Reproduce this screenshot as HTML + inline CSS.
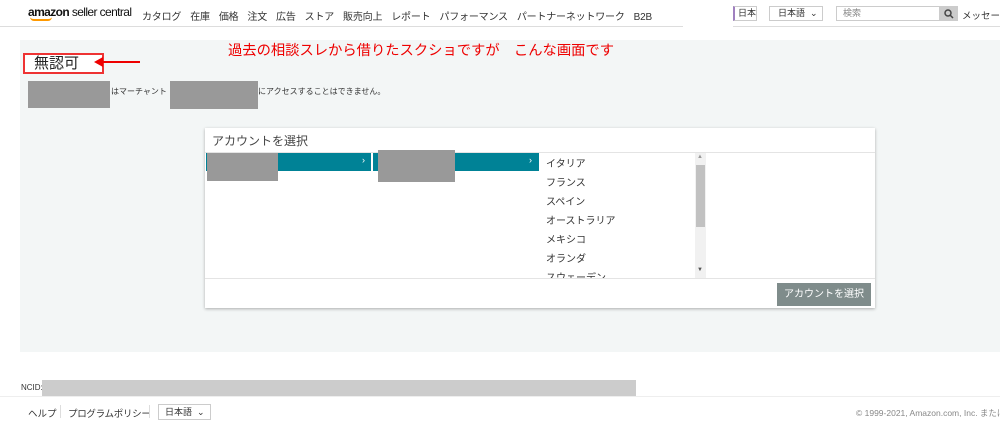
<!DOCTYPE html>
<html><head><meta charset="utf-8"><style>
*{margin:0;padding:0;box-sizing:border-box}
body{width:1000px;height:425px;overflow:hidden;background:#fff;font-family:"Liberation Sans","Noto Sans CJK JP",sans-serif;color:#333;position:relative}
.a{position:absolute;white-space:nowrap}
.nav span{margin-right:9px}
</style></head><body>
<div class="a" style="left:0;top:26px;width:683px;height:1px;background:#ddd"></div>
<div class="a" style="left:733px;top:26px;width:267px;height:1px;background:#ddd"></div>
<div class="a" style="left:28px;top:5px;font-size:12px;font-weight:bold;color:#111;letter-spacing:-0.6px">amazon <span style="font-weight:normal">seller central</span></div>
<div class="a" style="left:30px;top:17px;width:22px;height:4px;border-bottom:2px solid #f90;border-radius:0 0 10px 10px"></div>
<div class="a nav" style="left:142px;top:8px;font-size:10px;color:#333;letter-spacing:-0.2px"><span>カタログ</span><span>在庫</span><span>価格</span><span>注文</span><span>広告</span><span>ストア</span><span>販売向上</span><span>レポート</span><span>パフォーマンス</span><span>パートナーネットワーク</span><span>B2B</span></div>
<div class="a" style="left:733px;top:6px;width:24px;height:15px;border:1px solid #ccc;font-size:9px;line-height:13px;padding-left:3px;border-left:2px solid #a080c0">日本</div>
<div class="a" style="left:769px;top:6px;width:54px;height:15px;border:1px solid #ccc;font-size:9px;line-height:13px;padding-left:8px">日本語 &nbsp;⌄</div>
<div class="a" style="left:836px;top:6px;width:104px;height:15px;border:1px solid #ccc;font-size:9px;line-height:13px;padding-left:6px;color:#888">検索</div>
<div class="a" style="left:940px;top:6px;width:18px;height:15px;background:#ccc"><svg width="18" height="15"><circle cx="8" cy="7" r="3" fill="none" stroke="#444" stroke-width="1.5"/><path d="M10 9l3 3" stroke="#444" stroke-width="1.5"/></svg></div>
<div class="a" style="left:962px;top:8px;font-size:9.5px">メッセージ</div>

<div class="a" style="left:20px;top:40px;width:980px;height:312px;background:#f3f6f6"></div>
<div class="a" style="left:228px;top:39px;font-size:14.3px;color:#e00">過去の相談スレから借りたスクショですが　こんな画面です</div>
<div class="a" style="left:23px;top:53px;width:81px;height:21px;border:2px solid #e33;background:#fff;font-size:15px;line-height:17px;padding-left:9px;color:#222">無認可</div>
<div class="a" style="left:100px;top:61px;width:40px;height:2px;background:#e00"></div>
<div class="a" style="left:94px;top:57px;width:0;height:0;border-top:5px solid transparent;border-bottom:5px solid transparent;border-right:9px solid #e00"></div>
<div class="a" style="left:28px;top:81px;width:82px;height:27px;background:#999"></div>
<div class="a" style="left:111px;top:86px;font-size:8px;color:#333">はマーチャント</div>
<div class="a" style="left:170px;top:81px;width:88px;height:28px;background:#999"></div>
<div class="a" style="left:258px;top:86px;font-size:8px;color:#333">にアクセスすることはできません。</div>

<div class="a" style="left:205px;top:128px;width:670px;height:180px;background:#fff;box-shadow:0 1px 3px rgba(0,0,0,.3)"></div>
<div class="a" style="left:212px;top:132px;font-size:12px;color:#444">アカウントを選択</div>
<div class="a" style="left:205px;top:152px;width:670px;height:1px;background:#e4e4e4"></div>
<div class="a" style="left:206px;top:153px;width:165px;height:18px;background:#008296"></div>
<div class="a" style="left:373px;top:153px;width:166px;height:18px;background:#008296"></div>
<div class="a" style="left:362px;top:155px;font-size:9px;color:#fff">›</div>
<div class="a" style="left:529px;top:155px;font-size:9px;color:#fff">›</div>
<div class="a" style="left:207px;top:153px;width:71px;height:28px;background:#999"></div>
<div class="a" style="left:378px;top:150px;width:77px;height:32px;background:#999"></div>
<div class="a" style="left:546px;top:155px;font-size:10px;line-height:19px;color:#333;height:123px;overflow:hidden">イタリア<br>フランス<br>スペイン<br>オーストラリア<br>メキシコ<br>オランダ<br>スウェーデン</div>
<div class="a" style="left:695px;top:153px;width:11px;height:125px;background:#f1f1f1"></div>
<div class="a" style="left:696px;top:165px;width:9px;height:62px;background:#c1c1c1"></div>
<div class="a" style="left:697px;top:154px;font-size:6px;color:#999">▲</div>
<div class="a" style="left:697px;top:267px;font-size:6px;color:#555">▼</div>
<div class="a" style="left:205px;top:278px;width:670px;height:1px;background:#e4e4e4"></div>
<div class="a" style="left:777px;top:283px;width:94px;height:23px;background:#7f8c8b;color:#fff;font-size:10px;text-align:center;line-height:23px">アカウントを選択</div>

<div class="a" style="left:21px;top:383px;font-size:8px;color:#333">NCID:</div>
<div class="a" style="left:42px;top:380px;width:594px;height:16px;background:#ccc"></div>
<div class="a" style="left:0;top:396px;width:1000px;height:1px;background:#eee"></div>
<div class="a" style="left:28px;top:406px;font-size:9.5px;color:#333">ヘルプ</div>
<div class="a" style="left:60px;top:405px;width:1px;height:13px;background:#ddd"></div>
<div class="a" style="left:68px;top:406px;font-size:9.5px;color:#333;letter-spacing:-0.3px">プログラムポリシー</div>
<div class="a" style="left:149px;top:405px;width:1px;height:13px;background:#ddd"></div>
<div class="a" style="left:158px;top:404px;width:53px;height:16px;border:1px solid #ccc;font-size:9px;line-height:14px;padding-left:6px">日本語 &nbsp;⌄</div>
<div class="a" style="left:856px;top:407px;font-size:8.5px;color:#888">© 1999-2021, Amazon.com, Inc. または</div>
</body></html>
